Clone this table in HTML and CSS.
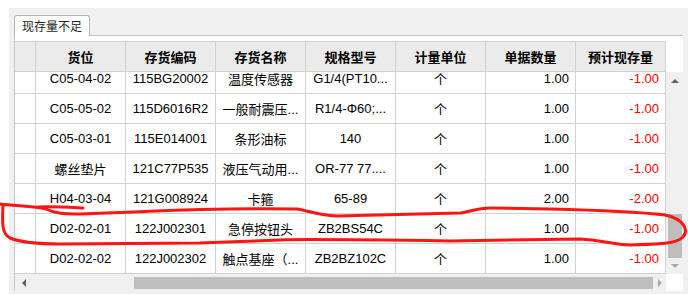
FILE: index.html
```html
<!DOCTYPE html>
<html lang="zh-CN">
<head>
<meta charset="utf-8">
<title>现存量不足</title>
<link rel="stylesheet" href="styles.css">
</head>
<body>
<div class="panel">
  <div class="tabs"><div class="tab">现存量不足</div></div>
  <div class="content">
    <div class="grid">
      <div class="main">
        <div class="row head">
          <div class="c rh"></div>
          <div class="c">货位</div>
          <div class="c">存货编码</div>
          <div class="c">存货名称</div>
          <div class="c">规格型号</div>
          <div class="c">计量单位</div>
          <div class="c">单据数量</div>
          <div class="c">预计现存量</div>
        </div>
        <div class="body">
          <div class="row first">
            <div class="c rh"></div><div class="c">C05-04-02</div><div class="c">115BG20002</div><div class="c">温度传感器</div><div class="c">G1/4(PT10...</div><div class="c">个</div><div class="c num">1.00</div><div class="c num neg">-1.00</div>
          </div>
          <div class="row">
            <div class="c rh"></div><div class="c">C05-05-02</div><div class="c">115D6016R2</div><div class="c">一般耐震压...</div><div class="c">R1/4-Φ60;...</div><div class="c">个</div><div class="c num">1.00</div><div class="c num neg">-1.00</div>
          </div>
          <div class="row">
            <div class="c rh"></div><div class="c">C05-03-01</div><div class="c">115E014001</div><div class="c">条形油标</div><div class="c">140</div><div class="c">个</div><div class="c num">1.00</div><div class="c num neg">-1.00</div>
          </div>
          <div class="row">
            <div class="c rh"></div><div class="c">螺丝垫片</div><div class="c">121C77P535</div><div class="c">液压气动用...</div><div class="c">OR-77 77....</div><div class="c">个</div><div class="c num">1.00</div><div class="c num neg">-1.00</div>
          </div>
          <div class="row">
            <div class="c rh"></div><div class="c">H04-03-04</div><div class="c">121G008924</div><div class="c">卡箍</div><div class="c">65-89</div><div class="c">个</div><div class="c num">2.00</div><div class="c num neg">-2.00</div>
          </div>
          <div class="row">
            <div class="c rh"></div><div class="c">D02-02-01</div><div class="c">122J002301</div><div class="c">急停按钮头</div><div class="c">ZB2BS54C</div><div class="c">个</div><div class="c num">1.00</div><div class="c num neg">-1.00</div>
          </div>
          <div class="row">
            <div class="c rh"></div><div class="c">D02-02-02</div><div class="c">122J002302</div><div class="c">触点基座（...</div><div class="c">ZB2BZ102C</div><div class="c">个</div><div class="c num">1.00</div><div class="c num neg">-1.00</div>
          </div>
        </div>
      </div>
      <div class="vside">
        <div class="vhead"></div>
        <div class="vscroll">
          <div class="btn"><span class="arr up"></span></div>
          <div class="spacer"></div>
          <div class="vthumb"></div>
          <div class="btn dbtn"><span class="arr down"></span></div>
        </div>
      </div>
      <div class="hscroll">
        <div class="btn lbtn"><span class="arr left"></span></div>
        <div class="spacer"></div>
        <div class="hthumb"></div>
        <div class="btn rbtn"><span class="arr right"></span></div>
      </div>
      <div class="corner"></div>
    </div>
  </div>
</div>
<svg class="mark" width="688" height="294" viewBox="0 0 688 294" xmlns="http://www.w3.org/2000/svg">
  <path d="M83,208 C65,207 50,206 38,207" />
  <path d="M0,204 C15,206 35,206 46,209 C54,213 62,214 80,214 L133,212 C180,210 210,208 297,209 C306,210 316,215 337,216 L460,213 C470,212 477,208 490,208 L550,209 C590,210 630,211 665,215 C684,219 689,230 683,237 C676,244 660,244 630,245 C612,244 600,240 580,239 L450,241 C380,240 300,239 280,240 C250,241 230,242 200,243 L60,244 C40,244 20,242 10,238 C2,234 2,224 3,205" />
</svg>
</body>
</html>
```

FILE: styles.css
```css
* { box-sizing: border-box; }

html, body {
  margin: 0;
  padding: 0;
  background: #ffffff;
}

body {
  width: 688px;
  height: 294px;
  overflow: hidden;
  position: relative;
  font-family: "Liberation Sans", "Noto Sans CJK SC", sans-serif;
  font-size: 13px;
  color: #000;
}

.panel {
  margin: 8px 0 0 9px;
  width: 679px;
  height: 286px;
  background: #f0f0f0;
  padding: 7px 5px 0 5px;
}

.tabs {
  display: flex;
  height: 21px;
  position: relative;
  z-index: 1;
}

.tab {
  width: 76px;
  height: 21px;
  border: 1px solid #b4b4b4;
  border-bottom: none;
  border-radius: 3px 3px 0 0;
  background: #ffffff;
  font-family: "Noto Sans CJK SC", sans-serif;
  font-size: 12px;
  line-height: 19px;
  padding-left: 7px;
  color: #222;
}

.content {
  margin-top: -1px;
  width: 669px;
  border-top: 1px solid #c3c3c3;
  border-left: 1px solid #c8c8c8;
  background: #ffffff;
  padding-top: 5px;
}

.grid {
  display: grid;
  grid-template-columns: 651px 17px;
  grid-template-rows: 233px 17px;
  background: #ffffff;
}

.main {
  display: flex;
  flex-direction: column;
  overflow: hidden;
}

.row {
  display: flex;
  height: 30px;
  flex: none;
}

.c {
  width: 90px;
  height: 30px;
  flex: none;
  border-right: 1px solid #d2d2d2;
  border-bottom: 1px solid #d2d2d2;
  display: flex;
  align-items: center;
  justify-content: center;
  white-space: nowrap;
  overflow: hidden;
  padding: 0 2px;
}

.c.rh { width: 21px; padding: 0; }

.head { height: 31px; }
.head .c {
  height: 31px;
  border-top: 1px solid #d2d2d2;
  background: #ebebeb;
  font-family: "Noto Sans CJK SC", sans-serif;
  font-weight: bold;
  font-size: 13px;
}

.body {
  height: 202px;
  overflow: hidden;
  display: flex;
  flex-direction: column;
}

.row.first { margin-top: -8px; }

.c.num {
  justify-content: flex-end;
  padding-right: 6px;
}

.c.neg { color: #ff0000; }

.vside {
  display: flex;
  flex-direction: column;
}

.vhead { height: 31px; flex: none; background: #ffffff; }

.vscroll {
  height: 202px;
  display: flex;
  flex-direction: column;
  background: #f0f0f0;
}

.btn {
  flex: none;
  display: flex;
  align-items: center;
  justify-content: center;
}

.vscroll .btn { height: 17px; }
.vscroll .dbtn { height: 16px; }

.spacer { flex: 1; }

.vthumb {
  flex: none;
  height: 44px;
  margin: 0 1px 0 2px;
  background: #bdbdbd;
}

.hscroll {
  display: flex;
  align-items: stretch;
  background: #f0f0f0;
  height: 17px;
}

.hscroll .lbtn { width: 17px; }
.hscroll .rbtn { width: 13px; }

.hthumb {
  flex: none;
  width: 519px;
  margin: 3px 0 2px 0;
  background: #bdbdbd;
}

.corner { background: #ffffff; }

.arr {
  width: 0;
  height: 0;
  border-style: solid;
  display: block;
}

.arr.up {
  border-width: 0 4px 4px 4px;
  border-color: transparent transparent #606060 transparent;
}

.arr.down {
  border-width: 4px 4px 0 4px;
  border-color: #a8a8a8 transparent transparent transparent;
}

.arr.left {
  border-width: 4px 4px 4px 0;
  border-color: transparent #606060 transparent transparent;
}

.arr.right {
  border-width: 4px 0 4px 4px;
  border-color: transparent transparent transparent #a8a8a8;
}

.mark {
  position: absolute;
  left: 0;
  top: 0;
  pointer-events: none;
  fill: none;
  stroke: #ff1414;
  stroke-width: 3;
  stroke-linecap: round;
  stroke-linejoin: round;
}
```
